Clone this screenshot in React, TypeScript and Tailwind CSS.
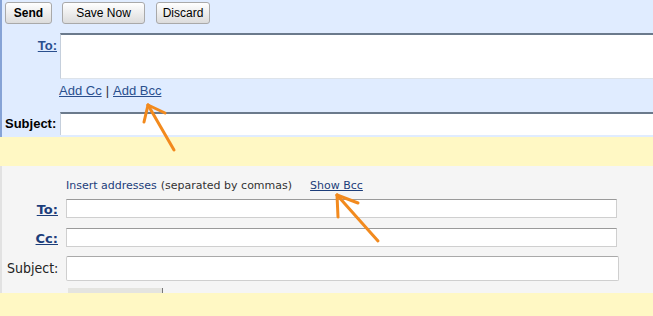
import React from "react";

// ── Bits ─────────────────────────────────────────────────────────────────────

function Btn({ children, w, bold }: { children: React.ReactNode; w: string; bold?: boolean }) {
  return (
    <button
      className={`${w} h-[22px] rounded-[3px] border border-[#a9a9a9] bg-gradient-to-b from-[#ffffff] to-[#dcdcdc] text-[12px] text-black ${
        bold ? "font-bold" : ""
      }`}
    >
      {children}
    </button>
  );
}

function Arrow({ tip, a, b, tail }: { tip: [number, number]; a: [number, number]; b: [number, number]; tail: [number, number] }) {
  return (
    <g stroke="#f28a1e" strokeWidth={3} strokeLinecap="round" fill="none">
      <line x1={tail[0]} y1={tail[1]} x2={tip[0]} y2={tip[1]} />
      <line x1={tip[0]} y1={tip[1]} x2={a[0]} y2={a[1]} />
      <line x1={tip[0]} y1={tip[1]} x2={b[0]} y2={b[1]} />
    </g>
  );
}

// ── App ──────────────────────────────────────────────────────────────────────

export default function App() {
  return (
    <div className="relative w-[653px] h-[316px] overflow-hidden bg-[#fff8c4] font-['Liberation_Sans',Arial,sans-serif]">
      {/* Old compose box */}
      <div className="h-[137px] bg-[#e0ecff] border-l-2 border-[#86a3d6]">
        <div className="flex pt-[2px] pl-[3px]">
          <Btn w="w-[47px]" bold>Send</Btn>
          <div className="w-[10px]" />
          <Btn w="w-[83px]">Save Now</Btn>
          <div className="w-[11px]" />
          <Btn w="w-[54px]">Discard</Btn>
        </div>

        <div className="flex mt-[9px]">
          <div className="w-[55px] text-right pt-[3px] text-[13px] font-bold text-[#2a4f8e] underline">To:</div>
          <div className="ml-[3px] flex-1 h-[46px] bg-white border-t-2 border-[#6b7a8c] border-l border-l-[#c5cfdc] border-b border-b-[#dde3ea]" />
        </div>

        <div className="flex h-[24px] items-center pl-[57px] text-[13px] text-[#2a4f8e]">
          <span className="underline">Add Cc</span>
          <span className="text-[#333] px-[4px]">|</span>
          <span className="underline">Add Bcc</span>
        </div>

        <div className="flex mt-[9px] items-center">
          <div className="w-[56px] pl-[3px] text-[13px] font-bold text-black">Subject:</div>
          <div className="ml-[2px] flex-1 h-[23px] bg-white border-t-2 border-[#6b7a8c] border-l border-l-[#c5cfdc]" />
        </div>
      </div>

      <div className="h-[29px]" />

      {/* New compose box */}
      <div className="h-[127px] bg-[#f5f5f5] border-l-2 border-[#e2e2e2] font-['DejaVu_Sans',Verdana,sans-serif]">
        <div className="pt-[12px] pl-[64px] h-[33px] text-[11px] flex items-start">
          <span className="text-[#1c3d7a]">Insert addresses</span>
          <span className="text-[#333] ml-[4px]">(separated by commas)</span>
          <span className="text-[#1c3d7a] underline ml-[18px]">Show Bcc</span>
        </div>

        <div className="flex items-center h-[19px]">
          <div className="w-[56px] pt-[3px] text-right text-[13px] font-bold text-[#1c3d7a] underline">To:</div>
          <div className="ml-[8px] w-[551px] h-[19px] bg-white border border-[#cfcfcf] border-t-[#9a9a9a]" />
        </div>

        <div className="flex items-center h-[19px] mt-[10px]">
          <div className="w-[56px] pt-[3px] text-right text-[13px] font-bold text-[#1c3d7a] underline">Cc:</div>
          <div className="ml-[8px] w-[551px] h-[19px] bg-white border border-[#cfcfcf] border-t-[#9a9a9a]" />
        </div>

        <div className="flex items-center h-[25px] mt-[9px]">
          <div className="w-[56px] pl-[5px] text-[14px] text-[#222] font-['DejaVu_Sans_Condensed',sans-serif]">Subject:</div>
          <div className="ml-[8px] w-[553px] h-[25px] bg-white border border-[#cfcfcf] border-t-[#a9a9a9] rounded-[2px]" />
        </div>

        <div className="ml-[66px] mt-[7px] w-[95px] h-[5px] bg-[#e4e4e0] border-r border-[#777]" />
      </div>

      {/* Annotation arrows */}
      <svg className="absolute inset-0 pointer-events-none" width={653} height={316}>
        <Arrow tip={[148, 105]} a={[165, 113]} b={[144, 122]} tail={[174, 150]} />
        <Arrow tip={[337, 195]} a={[358, 203]} b={[338, 217]} tail={[378, 241]} />
      </svg>
    </div>
  );
}
